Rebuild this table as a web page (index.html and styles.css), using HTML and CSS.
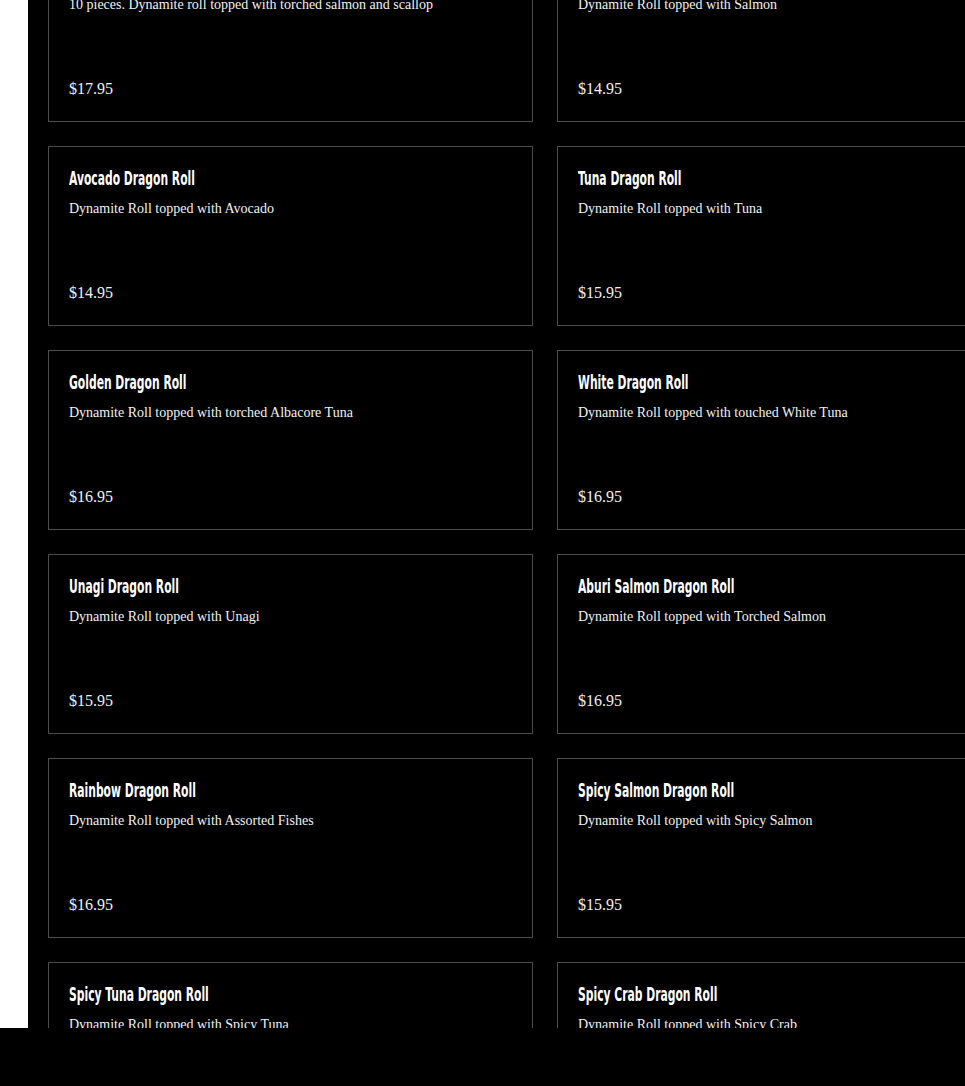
FILE: index.html
```html
<!DOCTYPE html>
<html lang="en">
<head>
<meta charset="utf-8">
<title>Dragon Rolls</title>
<link rel="stylesheet" href="styles.css">
</head>
<body>
<main class="menu">
  <div class="grid">
    <article class="card"><h3 class="name">Dragon Roll Special</h3><p class="desc">10 pieces. Dynamite roll topped with torched salmon and scallop</p><p class="price">$17.95</p></article>
    <article class="card"><h3 class="name">Salmon Dragon Roll</h3><p class="desc">Dynamite Roll topped with Salmon</p><p class="price">$14.95</p></article>
    <article class="card"><h3 class="name">Avocado Dragon Roll</h3><p class="desc">Dynamite Roll topped with Avocado</p><p class="price">$14.95</p></article>
    <article class="card"><h3 class="name">Tuna Dragon Roll</h3><p class="desc">Dynamite Roll topped with Tuna</p><p class="price">$15.95</p></article>
    <article class="card"><h3 class="name">Golden Dragon Roll</h3><p class="desc">Dynamite Roll topped with torched Albacore Tuna</p><p class="price">$16.95</p></article>
    <article class="card"><h3 class="name">White Dragon Roll</h3><p class="desc">Dynamite Roll topped with touched White Tuna</p><p class="price">$16.95</p></article>
    <article class="card"><h3 class="name">Unagi Dragon Roll</h3><p class="desc">Dynamite Roll topped with Unagi</p><p class="price">$15.95</p></article>
    <article class="card"><h3 class="name">Aburi Salmon Dragon Roll</h3><p class="desc">Dynamite Roll topped with Torched Salmon</p><p class="price">$16.95</p></article>
    <article class="card"><h3 class="name">Rainbow Dragon Roll</h3><p class="desc">Dynamite Roll topped with Assorted Fishes</p><p class="price">$16.95</p></article>
    <article class="card"><h3 class="name">Spicy Salmon Dragon Roll</h3><p class="desc">Dynamite Roll topped with Spicy Salmon</p><p class="price">$15.95</p></article>
    <article class="card"><h3 class="name">Spicy Tuna Dragon Roll</h3><p class="desc">Dynamite Roll topped with Spicy Tuna</p><p class="price">$16.95</p></article>
    <article class="card"><h3 class="name">Spicy Crab Dragon Roll</h3><p class="desc">Dynamite Roll topped with Spicy Crab</p><p class="price">$16.95</p></article>
  </div>
</main>
<div class="bottom-bar"></div>
</body>
</html>
```
FILE: styles.css
```css
html, body {
  margin: 0;
  padding: 0;
  background: #ffffff;
  overflow: hidden;
  height: 100%;
}
.menu {
  margin-left: 28px;
  background: #000;
  min-height: 100%;
  padding: 0 20px;
  overflow: hidden;
}
.grid {
  display: grid;
  grid-template-columns: 485px 485px;
  column-gap: 24px;
  row-gap: 24px;
  margin-top: -58px;
  width: 994px;
}
.card {
  box-sizing: border-box;
  height: 180px;
  border: 1px solid #4d4d4d;
  padding: 19px 20px 0 20px;
  display: flex;
  flex-direction: column;
  color: #fff;
}
.name {
  margin: 0;
  font-family: "DejaVu Sans Condensed", "DejaVu Sans", sans-serif;
  font-stretch: condensed;
  font-weight: bold;
  font-size: 19px;
  line-height: 24px;
  height: 24px;
  color: #fff;
  white-space: nowrap;
  transform: scaleX(0.63);
  transform-origin: left center;
}
.desc {
  margin: 9px 0 0 0;
  font-family: "Liberation Serif", "Times New Roman", serif;
  font-size: 14px;
  line-height: 20px;
  color: #f2f2f2;
}
.price {
  margin: auto 0 0 0;
  font-family: "Liberation Serif", "Times New Roman", serif;
  font-size: 16px;
  line-height: 20px;
  padding-bottom: 22px;
  color: #f2f2f2;
}
.bottom-bar {
  position: fixed;
  left: 0;
  right: 0;
  bottom: 0;
  height: 58px;
  background: #000;
}
```
